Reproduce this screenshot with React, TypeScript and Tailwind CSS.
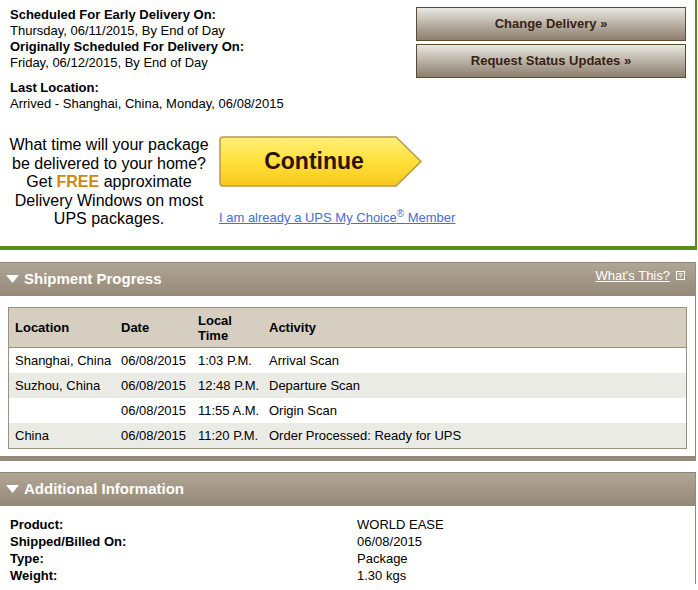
import React from "react";

const font = { fontFamily: '"Liberation Sans", Arial, sans-serif' };

function PanelHeader({ title, right }: { title: string; right?: React.ReactNode }) {
  return (
    <div className="flex h-[34px] items-center justify-between border-t border-[#8f8472] bg-gradient-to-b from-[#b0a695] to-[#958978] pl-[6px] pr-[10px]">
      <div className="flex items-center">
        <svg width="13" height="9" viewBox="0 0 13 9" className="mr-[5px]">
          <polygon points="0,0 13,0 6.5,8" fill="#ffffff" />
        </svg>
        <span className="text-[15px] font-bold text-white">{title}</span>
      </div>
      {right}
    </div>
  );
}

export default function App() {
  const rows = [
    ["Shanghai, China", "06/08/2015", "1:03 P.M.", "Arrival Scan"],
    ["Suzhou, China", "06/08/2015", "12:48 P.M.", "Departure Scan"],
    ["", "06/08/2015", "11:55 A.M.", "Origin Scan"],
    ["China", "06/08/2015", "11:20 P.M.", "Order Processed: Ready for UPS"],
  ];
  const info = [
    ["Product:", "WORLD EASE"],
    ["Shipped/Billed On:", "06/08/2015"],
    ["Type:", "Package"],
    ["Weight:", "1.30 kgs"],
  ];
  return (
    <div style={font} className="h-[590px] w-[698px] overflow-hidden bg-white text-[13px] text-black">
      {/* Top section */}
      <div className="h-[250px] w-[697px] border-b-4 border-r-2 border-[#5b8c1e]">
        <div className="flex">
          <div className="flex-1 pl-[10px] pt-[7px] leading-[16px]">
            <div className="font-bold">Scheduled For Early Delivery On:</div>
            <div>Thursday, 06/11/2015, By End of Day</div>
            <div className="font-bold">Originally Scheduled For Delivery On:</div>
            <div>Friday, 06/12/2015, By End of Day</div>
            <div className="mt-[9px] font-bold">Last Location:</div>
            <div className="leading-[15px]">Arrived - Shanghai, China, Monday, 06/08/2015</div>
          </div>
          <div className="mr-[9px] flex w-[270px] flex-col gap-[3px] pt-[7px]">
            {["Change Delivery »", "Request Status Updates »"].map((t) => (
              <div
                key={t}
                className="flex h-[34px] items-center justify-center border border-[#5a4a36] bg-gradient-to-b from-[#eae8e1] to-[#8c7f6e] text-[13px] font-bold text-[#3a2212]"
              >
                {t}
              </div>
            ))}
          </div>
        </div>
        <div className="mt-[25px] flex">
          <div className="ml-[8px] w-[202px] text-center text-[16px] leading-[18.5px]">
            <div>What time will your package</div>
            <div>be delivered to your home?</div>
            <div>
              Get <span className="font-bold text-[#d1870f]">FREE</span> approximate
            </div>
            <div>Delivery Windows on most</div>
            <div>UPS packages.</div>
          </div>
          <div className="ml-[9px] flex flex-col">
            <div className="relative h-[51px] w-[204px]">
              <svg width="204" height="51" viewBox="0 0 204 51" className="absolute left-0 top-0">
                <defs>
                  <linearGradient id="yg" x1="0" y1="0" x2="0" y2="1">
                    <stop offset="0" stopColor="#fff07a" />
                    <stop offset="0.5" stopColor="#ffe03a" />
                    <stop offset="1" stopColor="#f8c81e" />
                  </linearGradient>
                </defs>
                <path
                  d="M4,1 L177,1 L202,25.5 L177,50 L4,50 Q1,50 1,47 L1,4 Q1,1 4,1 Z"
                  fill="url(#yg)"
                  stroke="#b79a48"
                  strokeWidth="1.5"
                />
              </svg>
              <div className="absolute left-0 top-0 flex h-[51px] w-[190px] items-center justify-center text-[23px] font-bold text-[#2b1405]">
                Continue
              </div>
            </div>
            <a className="mt-[21px] whitespace-nowrap text-[13px] text-[#4a6bd8] underline" href="#">
              I am already a UPS My Choice<sup className="text-[10px]">®</sup> Member
            </a>
          </div>
        </div>
      </div>

      {/* Shipment Progress */}
      <div className="mt-[12px] w-[696px] border-b-[5px] border-r border-[#958978]">
        <PanelHeader
          title="Shipment Progress"
          right={
            <div className="mb-[8px] flex items-center text-white">
              <span className="text-[13px] underline">What's This?</span>
              <span className="ml-[6px] flex h-[9px] w-[9px] items-center justify-center border border-white text-[7px] font-bold leading-none">
                ?
              </span>
            </div>
          }
        />
        <div className="px-[8px] pb-[7px] pt-[11px]">
          <div className="border border-[#9c907f]">
            <div className="flex h-[40px] items-center border-b border-[#9c907f] bg-[#d6cec1] font-bold">
              <div className="w-[112px] shrink-0 pl-[6px]">Location</div>
              <div className="w-[77px] shrink-0">Date</div>
              <div className="w-[71px] shrink-0 leading-[15px]">
                Local
                <br />
                Time
              </div>
              <div className="flex-1">Activity</div>
            </div>
            {rows.map((r, i) => (
              <div
                key={i}
                className={`flex h-[25px] items-center whitespace-nowrap ${i % 2 === 1 ? "bg-[#ebebe6]" : "bg-white"}`}
              >
                <div className="w-[112px] shrink-0 pl-[6px]">{r[0]}</div>
                <div className="w-[77px] shrink-0">{r[1]}</div>
                <div className="w-[71px] shrink-0">{r[2]}</div>
                <div className="flex-1">{r[3]}</div>
              </div>
            ))}
          </div>
        </div>
      </div>

      {/* Additional Information */}
      <div className="mt-[11px] w-[696px] border-r border-[#958978]">
        <PanelHeader title="Additional Information" />
        <div className="pl-[10px] pt-[10px] leading-[17px]">
          {info.map(([k, v]) => (
            <div key={k} className="flex">
              <div className="w-[347px] font-bold">{k}</div>
              <div>{v}</div>
            </div>
          ))}
        </div>
      </div>
    </div>
  );
}
